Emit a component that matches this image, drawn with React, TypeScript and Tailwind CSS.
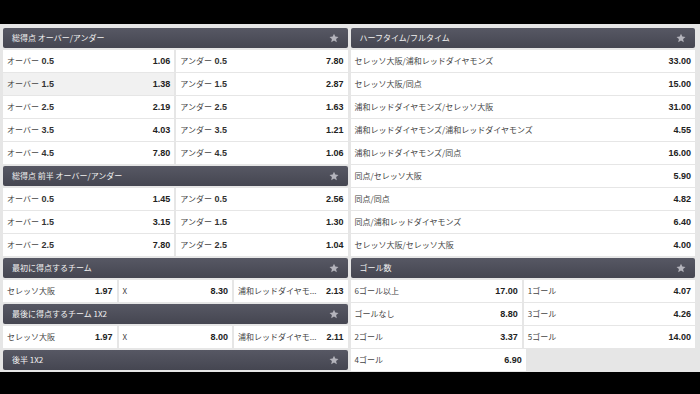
import React from 'react'

type Pick = { label: string; odds: string; hot?: boolean }

const jp = { fontFamily: '"Noto Sans CJK JP", "Noto Sans", sans-serif' }
const num = { fontFamily: '"Liberation Sans", Arial, sans-serif' }

const Star = () => (
  <svg width="10" height="10" viewBox="0 0 24 24" className="fill-[#b4b4bc]">
    <polygon points="12,1.5 15.1,8.6 22.8,9.3 17,14.4 18.7,22 12,18 5.3,22 7,14.4 1.2,9.3 8.9,8.6" />
  </svg>
)

const Header = ({ title }: { title: string }) => (
  <div className="h-[20px] shrink-0 rounded-[2px] bg-gradient-to-b from-[#575864] to-[#454651] flex items-center justify-between pl-[9px] pr-[9px]">
    <span className="text-[8px] text-[#f2f2f2] leading-none" style={jp}>{title}</span>
    <Star />
  </div>
)

// label text: katakana/kanji in CJK font, the line numbers a bit heavier
const Label = ({ text }: { text: string }) => {
  const m = text.match(/^(.*?)( [\d.]+)$/)
  return (
    <span className="text-[8px] text-[#444] leading-none whitespace-nowrap" style={jp}>
      {m ? (
        <>
          {m[1]}
          <span className="font-bold text-[9px] text-[#333]" style={num}>{m[2]}</span>
        </>
      ) : (
        text
      )}
    </span>
  )
}

const Cell = ({ p }: { p?: Pick }) => {
  if (!p) return <div className="flex-1 min-w-0" />
  return (
    <div className={'flex-1 min-w-0 h-full flex items-center justify-between gap-2 pl-[4px] pr-[4px] ' + (p.hot ? 'bg-[#f1f1f1]' : 'bg-white')}>
      <Label text={p.label} />
      <span className="font-bold text-[9px] text-[#222] leading-none shrink-0" style={num}>{p.odds}</span>
    </div>
  )
}

const Row = ({ picks }: { picks: (Pick | undefined)[] }) => (
  <div className="h-[22px] shrink-0 flex gap-[2px]">
    {picks.map((p, i) => (
      <Cell key={i} p={p} />
    ))}
  </div>
)

const Section = ({ title, rows }: { title: string; rows: (Pick | undefined)[][] }) => (
  <div className="flex flex-col">
    <Header title={title} />
    <div className="flex flex-col gap-[1px] mt-[2px]">
      {rows.map((r, i) => (
        <Row key={i} picks={r} />
      ))}
    </div>
  </div>
)

const ou = (a: string[][]) => a.map(([l, o, r, o2]) => [{ label: 'オーバー ' + l, odds: o }, { label: 'アンダー ' + r, odds: o2 }] as Pick[])

const total = ou([
  ['0.5', '1.06', '0.5', '7.80'],
  ['1.5', '1.38', '1.5', '2.87'],
  ['2.5', '2.19', '2.5', '1.63'],
  ['3.5', '4.03', '3.5', '1.21'],
  ['4.5', '7.80', '4.5', '1.06'],
])
total[1][0].hot = true

const firstHalf = ou([
  ['0.5', '1.45', '0.5', '2.56'],
  ['1.5', '3.15', '1.5', '1.30'],
  ['2.5', '7.80', '2.5', '1.04'],
])

const x12 = (a: string, b: string, c: string): Pick[][] => [
  [
    { label: 'セレッソ大阪', odds: a },
    { label: 'X', odds: b },
    { label: '浦和レッドダイヤモ...', odds: c },
  ],
]

const htft: Pick[][] = [
  ['セレッソ大阪/浦和レッドダイヤモンズ', '33.00'],
  ['セレッソ大阪/同点', '15.00'],
  ['浦和レッドダイヤモンズ/セレッソ大阪', '31.00'],
  ['浦和レッドダイヤモンズ/浦和レッドダイヤモンズ', '4.55'],
  ['浦和レッドダイヤモンズ/同点', '16.00'],
  ['同点/セレッソ大阪', '5.90'],
  ['同点/同点', '4.82'],
  ['同点/浦和レッドダイヤモンズ', '6.40'],
  ['セレッソ大阪/セレッソ大阪', '4.00'],
].map(([label, odds]) => [{ label, odds }])

const goals: (Pick | undefined)[][] = [
  [{ label: '6ゴール以上', odds: '17.00' }, { label: '1ゴール', odds: '4.07' }],
  [{ label: 'ゴールなし', odds: '8.80' }, { label: '3ゴール', odds: '4.26' }],
  [{ label: '2ゴール', odds: '3.37' }, { label: '5ゴール', odds: '14.00' }],
  [{ label: '4ゴール', odds: '6.90' }, undefined],
]

export default function App() {
  return (
    <div className="w-[700px] h-[394px] bg-black overflow-hidden">
      <div className="mt-[24px] h-[348px] bg-[#e6e6e6] overflow-hidden flex gap-[3px] pt-[4px] pl-[3px] pr-[5px]">
        <div className="flex-1 min-w-0 flex flex-col gap-[2px]">
          <Section title="総得点 オーバー/アンダー" rows={total} />
          <Section title="総得点 前半 オーバー/アンダー" rows={firstHalf} />
          <Section title="最初に得点するチーム" rows={x12('1.97', '8.30', '2.13')} />
          <Section title="最後に得点するチーム 1X2" rows={x12('1.97', '8.00', '2.11')} />
          <Section title="後半 1X2" rows={[]} />
        </div>
        <div className="flex-1 min-w-0 flex flex-col gap-[2px]">
          <Section title="ハーフタイム/フルタイム" rows={htft} />
          <Section title="ゴール数" rows={goals} />
        </div>
      </div>
    </div>
  )
}
